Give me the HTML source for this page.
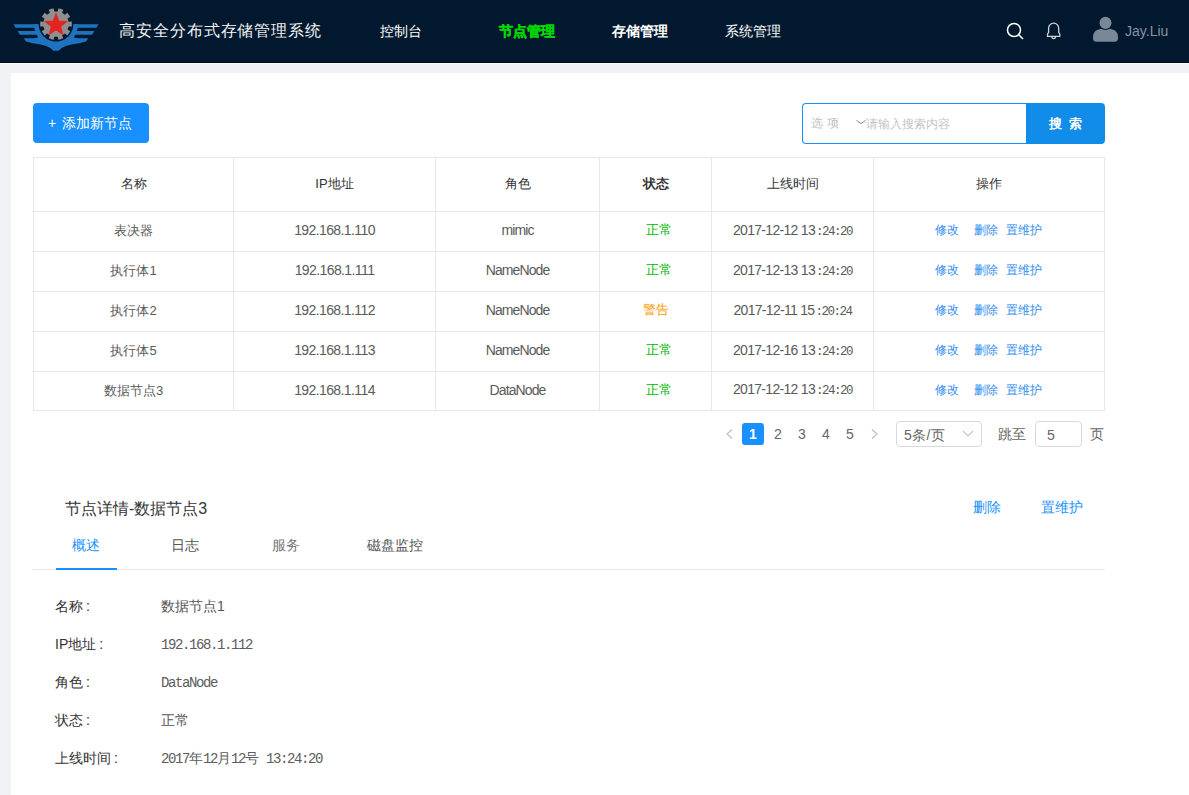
<!DOCTYPE html>
<html><head><meta charset="utf-8">
<style>
*{margin:0;padding:0;box-sizing:border-box}
html,body{width:1189px;height:795px;overflow:hidden;background:#f0f2f5;font-family:"Liberation Sans",sans-serif;}
.abs{position:absolute}
#hdr{position:absolute;left:0;top:0;width:1189px;height:62px;background:#01182e}
#hdrline{position:absolute;left:0;top:62px;width:1189px;height:1px;background:#000a18}
#hdrline2{position:absolute;left:0;top:63px;width:1189px;height:1px;background:#fbfbfc}
#panel{position:absolute;left:11px;top:73px;width:1178px;height:722px;background:#fff}
.t{position:absolute;white-space:nowrap;line-height:1}
.nav{color:#fff;font-size:14px}
table{border-collapse:collapse}
#tbl{position:absolute;left:33px;top:157px;}
#tbl td,#tbl th{border:1px solid #e8e8e8;text-align:center;vertical-align:middle;padding:0;white-space:nowrap}
#tbl th{height:54px;font-size:13px;color:#333;font-weight:normal;padding-bottom:2px}
#tbl td{height:40px;font-size:14px;color:#5a5a5a;letter-spacing:-0.6px;padding-bottom:3px}
.role{letter-spacing:-0.9px!important}
#tbl td.cj{font-size:13px;letter-spacing:0;padding-bottom:1px;color:#5a5a5a}
.mono{font-family:"Liberation Mono",monospace;font-size:12.5px;letter-spacing:-1.5px;margin-left:1px}
.tm{letter-spacing:-0.7px!important}
.ok{color:#00b800;font-size:12.5px;letter-spacing:0}
.warn{color:#ff9900;font-size:12.5px;letter-spacing:0}
.lnk{color:#2d8cf0;font-size:12.3px;letter-spacing:0;position:relative;left:-1px}
.lbl{font-size:14px;color:#333}
.val{font-size:14px;color:#555}
.cjk14{font-size:14px;letter-spacing:0}
</style></head><body>
<div id="hdr">
  <svg class="abs" style="left:0;top:0" width="110" height="60" viewBox="0 0 110 60">
    <g fill="#1f72bf"><path d="M13.50,24.30 L40.00,24.30 L40.00,27.65 L15.60,27.65Z"/><path d="M17.70,31.00 L40.00,31.00 L40.00,34.80 L19.80,34.80Z"/><path d="M23.60,38.20 L42.00,38.20 L42.00,41.50 L26.10,41.50Z"/><path d="M98.50,24.30 L72.00,24.30 L72.00,27.65 L96.40,27.65Z"/><path d="M94.30,31.00 L72.00,31.00 L72.00,34.80 L92.20,34.80Z"/><path d="M88.40,38.20 L70.00,38.20 L70.00,41.50 L85.90,41.50Z"/><path d="M34,24.3 A22,22 0 0 0 78,24.3 Z"/><path d="M26.1,41.3 L32.4,43.3 Q48,44.5 53.5,50.8 L58.5,50.8 Q64,44.5 79.6,43.3 L85.9,41.3 L70,36 L42,36 Z"/></g>
    <circle cx="56" cy="24.1" r="17.4" fill="#01182e"/>
    <path fill="#8f8f8f" d="M57.67,11.41 L58.50,8.30 L63.26,9.84 L62.11,12.85 L64.81,14.82 L67.31,12.79 L70.26,16.84 L67.55,18.59 L68.59,21.77 L71.80,21.60 L71.80,26.60 L68.59,26.43 L67.55,29.61 L70.26,31.36 L67.31,35.41 L64.81,33.38 L62.11,35.35 L63.26,38.36 L58.50,39.90 L57.67,36.79 L54.33,36.79 L53.50,39.90 L48.74,38.36 L49.89,35.35 L47.19,33.38 L44.69,35.41 L41.74,31.36 L44.45,29.61 L43.41,26.43 L40.20,26.60 L40.20,21.60 L43.41,21.77 L44.45,18.59 L41.74,16.84 L44.69,12.79 L47.19,14.82 L49.89,12.85 L48.74,9.84 L53.50,8.30 L54.33,11.41Z"/>
    <path fill="#e52421" d="M56.00,12.20 L59.17,20.63 L68.17,21.04 L61.14,26.67 L63.52,35.36 L56.00,30.40 L48.48,35.36 L50.86,26.67 L43.83,21.04 L52.83,20.63Z"/>
  </svg>
  <div class="t" style="left:119px;top:23px;font-size:16px;color:#f4f4f4;letter-spacing:0.92px">高安全分布式存储管理系统</div>
  <div class="t nav" style="left:380px;top:24px">控制台</div>
  <div class="t nav" style="left:499px;top:24px;color:#00d800;font-weight:bold;-webkit-text-stroke:0.35px #00d800">节点管理</div>
  <div class="t nav" style="left:612px;top:24px;font-weight:bold">存储管理</div>
  <div class="t nav" style="left:725px;top:24px">系统管理</div>
  <!-- search icon -->
  <svg class="abs" style="left:1004px;top:20px" width="22" height="22" viewBox="0 0 22 22">
    <circle cx="10" cy="10" r="6.5" fill="none" stroke="#fff" stroke-width="1.5"/>
    <path d="M14.8,14.8 L19,19" stroke="#fff" stroke-width="1.6"/>
  </svg>
  <!-- bell -->
  <svg class="abs" style="left:1043px;top:20px" width="20" height="22" viewBox="0 0 20 22">
    <path d="M5.6,12.5 L5.6,8.2 A5.05,5.05 0 0 1 15.7,8.2 L15.7,12.5 Q16.8,13.3 16.8,14.5 L16.8,16.4 L4.5,16.4 L4.5,14.5 Q4.5,13.3 5.6,12.5 Z" fill="none" stroke="#d0d3d8" stroke-width="1.3" stroke-linejoin="round"/>
    <path d="M8.7,16.6 A1.95,1.95 0 0 0 12.6,16.6" fill="none" stroke="#d0d3d8" stroke-width="1.2"/>
  </svg>
  <!-- avatar -->
  <svg class="abs" style="left:1092px;top:16px" width="28" height="28" viewBox="0 0 28 28">
    <path d="M1,21 Q1,12.6 13.5,12.6 Q26,12.6 26,21 L26,22.2 Q26,25.8 22.4,25.8 L4.6,25.8 Q1,25.8 1,22.2 Z" fill="#7a8796"/>
    <circle cx="13.5" cy="6.9" r="6.6" fill="#7a8796" stroke="#01182e" stroke-width="1.1"/>
  </svg>
  <div class="t" style="left:1125px;top:24px;font-size:14px;color:#8593a3">Jay.Liu</div>
</div>
<div id="hdrline"></div><div id="hdrline2"></div>
<div id="panel"></div>

<!-- add button -->
<div class="abs" style="left:33px;top:103px;width:116px;height:40px;background:#1890ff;border-radius:4px"></div>
<div class="t" style="left:48px;top:116px;font-size:14px;color:#fff">+<span style="margin-left:6px">添加新节点</span></div>

<!-- search group -->
<div class="abs" style="left:802px;top:103px;width:225px;height:41px;border:1px solid #1890ff;border-right:none;border-radius:4px 0 0 4px;background:#fff"></div>
<div class="abs" style="left:1026px;top:103px;width:79px;height:41px;background:#118ce8;border-radius:0 4px 4px 0"></div>
<div class="t" style="left:811px;top:117px;font-size:12px;color:#c0c0c0;letter-spacing:4px">选项</div>
<svg class="abs" style="left:855px;top:118px" width="12" height="8" viewBox="0 0 12 8"><path d="M1.5,2.5 L6,5.5 L10.5,2.5" fill="none" stroke="#888" stroke-width="1"/></svg>
<div class="t" style="left:866px;top:118px;font-size:12px;color:#c4c4c4">请输入搜索内容</div>
<div class="t" style="left:1049px;top:117px;font-size:13px;color:#fff;font-weight:bold;letter-spacing:7px">搜索</div>

<!-- table -->
<table id="tbl">
<tr><th style="width:200px">名称</th><th style="width:202px">IP地址</th><th style="width:164px">角色</th><th style="width:112px;font-weight:bold">状态</th><th style="width:162px">上线时间</th><th style="width:231px">操作</th></tr>
<tr><td class="cj">表决器</td><td>192.168.1.110</td><td class="role">mimic</td><td><span class="ok" style="padding-left:7px">正常</span></td><td class="tm">2017-12-12 13<span class="mono">:24:20</span></td><td><span class="lnk">修改<span style="margin-left:15px">删除</span><span style="margin-left:8px">置维护</span></span></td></tr>
<tr><td class="cj">执行体1</td><td>192.168.1.111</td><td class="role">NameNode</td><td><span class="ok" style="padding-left:7px">正常</span></td><td class="tm">2017-12-13 13<span class="mono">:24:20</span></td><td><span class="lnk">修改<span style="margin-left:15px">删除</span><span style="margin-left:8px">置维护</span></span></td></tr>
<tr><td class="cj">执行体2</td><td>192.168.1.112</td><td class="role">NameNode</td><td><span class="warn">警告</span></td><td class="tm">2017-12-11 15<span class="mono">:20:24</span></td><td><span class="lnk">修改<span style="margin-left:15px">删除</span><span style="margin-left:8px">置维护</span></span></td></tr>
<tr><td class="cj">执行体5</td><td>192.168.1.113</td><td class="role">NameNode</td><td><span class="ok" style="padding-left:7px">正常</span></td><td class="tm">2017-12-16 13<span class="mono">:24:20</span></td><td><span class="lnk">修改<span style="margin-left:15px">删除</span><span style="margin-left:8px">置维护</span></span></td></tr>
<tr style="height:39px"><td class="cj" style="height:39px">数据节点3</td><td style="height:39px">192.168.1.114</td><td class="role" style="height:39px">DataNode</td><td style="height:39px"><span class="ok" style="padding-left:7px">正常</span></td><td class="tm" style="height:39px">2017-12-12 13<span class="mono">:24:20</span></td><td style="height:39px"><span class="lnk">修改<span style="margin-left:15px">删除</span><span style="margin-left:8px">置维护</span></span></td></tr>
</table>

<!-- pagination -->
<svg class="abs" style="left:724px;top:428px" width="10" height="12" viewBox="0 0 10 12"><path d="M8,1.5 L3,6 L8,10.5" fill="none" stroke="#bdbdbd" stroke-width="1.1"/></svg>
<div class="abs" style="left:742px;top:423px;width:22px;height:22px;background:#1890ff;border-radius:3px"></div>
<div class="t" style="left:749px;top:427px;font-size:14px;color:#fff;font-weight:bold">1</div>
<div class="t" style="left:774px;top:427px;font-size:14px;color:#666">2</div>
<div class="t" style="left:798px;top:427px;font-size:14px;color:#666">3</div>
<div class="t" style="left:822px;top:427px;font-size:14px;color:#666">4</div>
<div class="t" style="left:846px;top:427px;font-size:14px;color:#666">5</div>
<svg class="abs" style="left:870px;top:428px" width="10" height="12" viewBox="0 0 10 12"><path d="M2,1.5 L7,6 L2,10.5" fill="none" stroke="#bdbdbd" stroke-width="1.1"/></svg>
<div class="abs" style="left:896px;top:421px;width:86px;height:26px;border:1px solid #d9d9d9;border-radius:4px"></div>
<div class="t" style="left:904px;top:428px;font-size:14px;color:#666;letter-spacing:0.3px">5条/页</div>
<svg class="abs" style="left:962px;top:429px" width="12" height="9" viewBox="0 0 12 9"><path d="M1,2 L6,7 L11,2" fill="none" stroke="#c4c4c4" stroke-width="1.1"/></svg>
<div class="t" style="left:998px;top:427px;font-size:14px;color:#666">跳至</div>
<div class="abs" style="left:1035px;top:421px;width:47px;height:26px;border:1px solid #d9d9d9;border-radius:4px"></div>
<div class="t" style="left:1047px;top:428px;font-size:14px;color:#666">5</div>
<div class="t" style="left:1090px;top:427px;font-size:14px;color:#666">页</div>

<!-- details -->
<div class="t" style="left:65px;top:501px;font-size:16px;color:#333">节点详情-数据节点3</div>
<div class="t" style="left:973px;top:500px;font-size:14px;color:#1890ff">删除</div>
<div class="t" style="left:1041px;top:500px;font-size:14px;color:#1890ff">置维护</div>
<div class="t" style="left:72px;top:538px;font-size:14px;color:#1890ff">概述</div>
<div class="t" style="left:171px;top:538px;font-size:14px;color:#555">日志</div>
<div class="t" style="left:272px;top:538px;font-size:14px;color:#777">服务</div>
<div class="t" style="left:367px;top:538px;font-size:14px;color:#555">磁盘监控</div>
<div class="abs" style="left:33px;top:569px;width:1072px;height:1px;background:#e8e8e8"></div>
<div class="abs" style="left:56px;top:568px;width:61px;height:2px;background:#1890ff"></div>

<div class="t lbl" style="left:55px;top:599px">名称<span style="margin-left:3px">:</span></div>
<div class="t val" style="left:161px;top:599px">数据节点1</div>
<div class="t lbl" style="left:55px;top:637px">IP地址<span style="margin-left:3px">:</span></div>
<div class="t val" style="left:161px;top:638px;font-family:'Liberation Mono',monospace;font-size:14px;letter-spacing:-1.4px;color:#5c5c5c">192.168.1.112</div>
<div class="t lbl" style="left:55px;top:675px">角色<span style="margin-left:3px">:</span></div>
<div class="t val" style="left:161px;top:676px;font-family:'Liberation Mono',monospace;font-size:14px;letter-spacing:-1.4px;color:#5c5c5c">DataNode</div>
<div class="t lbl" style="left:55px;top:713px">状态<span style="margin-left:3px">:</span></div>
<div class="t val" style="left:161px;top:713px">正常</div>
<div class="t lbl" style="left:55px;top:751px">上线时间<span style="margin-left:3px">:</span></div>
<div class="t val" style="left:161px;top:751.5px;font-family:'Liberation Mono',monospace;font-size:14px;letter-spacing:-1.4px;color:#5c5c5c">2017<span class="cjk14">年</span>12<span class="cjk14">月</span>12<span class="cjk14">号</span> 13:24:20</div>
</body></html>
